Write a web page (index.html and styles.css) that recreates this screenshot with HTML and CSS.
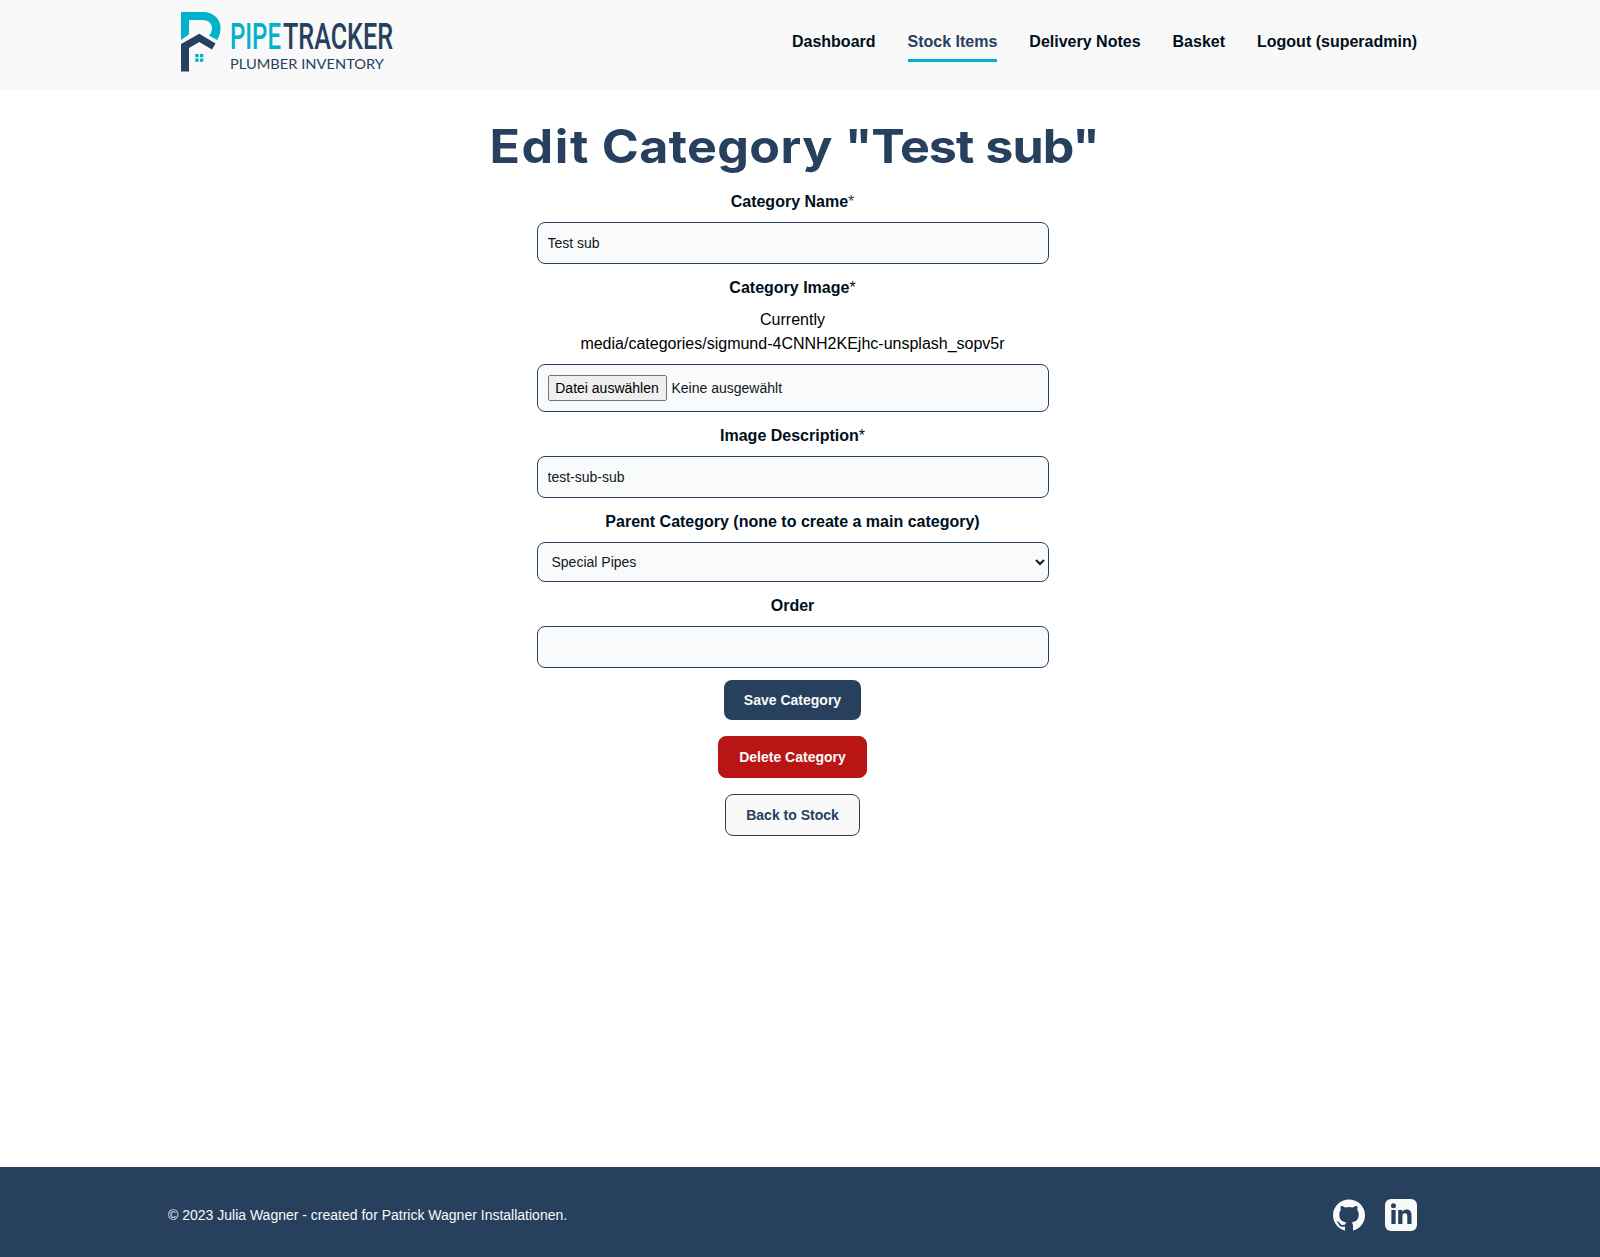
FILE: index.html
```html
<!DOCTYPE html>
<html lang="en">
<head>
<meta charset="utf-8">
<title>PipeTracker - Edit Category</title>
<link rel="stylesheet" href="styles.css">
</head>
<body>
<header class="header">
  <a class="logo">
    <svg width="216" height="66" viewBox="180 10 216 66" role="img" aria-label="PipeTracker Plumber Inventory">
      <path fill="#00b2ca" d="M181 12H203C213.500 12 220.500 19 220.500 28C220.500 33 219 37 217 40L209 35.500C210.800 33.500 212 31.500 212 28.500C212 23.500 208.500 20 203 20H189V34.500L181 40Z"/>
      <path fill="#27405e" d="M181 44L199.300 33.800L215.500 43.500L212 49.500L199.300 42L189 48V71.500H181Z"/>
      <path fill="#00b2ca" d="M195.200 54h3.400v3.300h-3.400zM200 54h3.300v3.300H200zM195.200 58.400h3.400v3.300h-3.400zM200 58.400h3.300v3.300H200z"/>
      <text class="logo-name logo-accent" x="230" y="48.500" textLength="51" lengthAdjust="spacingAndGlyphs">PIPE</text>
      <text class="logo-name" x="283" y="48.500" textLength="110" lengthAdjust="spacingAndGlyphs">TRACKER</text>
      <text class="logo-sub" x="230" y="68.800" textLength="154" lengthAdjust="spacingAndGlyphs">PLUMBER INVENTORY</text>
    </svg>
  </a>
  <nav class="nav">
    <a>Dashboard</a>
    <a class="active">Stock Items</a>
    <a>Delivery Notes</a>
    <a>Basket</a>
    <a>Logout (superadmin)</a>
  </nav>
</header>
<main class="main">
  <h1 class="title"><span class="title-text"><span class="wide">Edit</span> <span class="medium">Category</span> <span class="tight">"Test</span> <span class="tight">sub"</span></span></h1>
  <form class="form">
    <label class="label" for="name">Category Name<span class="star">*</span></label>
    <input class="field" id="name" type="text" value="Test sub">
    <span class="label">Category Image<span class="star dark">*</span></span>
    <p class="current">Currently<br>media/categories/sigmund-4CNNH2KEjhc-unsplash_sopv5r</p>
    <div class="field file"><span class="file-button">Datei auswählen</span><span>Keine ausgewählt</span></div>
    <label class="label" for="desc">Image Description<span class="star dark">*</span></label>
    <input class="field" id="desc" type="text" value="test-sub-sub">
    <label class="label" for="parent">Parent Category (none to create a main category)</label>
    <select class="field select" id="parent"><option>Special Pipes</option></select>
    <label class="label" for="order">Order</label>
    <input class="field" id="order" type="text">
    <button class="btn save" type="button">Save Category</button>
  </form>
  <a class="btn delete">Delete Category</a>
  <a class="btn back">Back to Stock</a>
</main>
<footer class="footer">
  <p class="copyright">© 2023 Julia Wagner - created for Patrick Wagner Installationen.</p>
  <div class="social">
    <svg width="32" height="32" viewBox="0 0 32 32">
      <path fill="#f9f9f9" d="M16 .4A16 16 0 0 0 0 16.200 16 16 0 0 0 12 31.600V27.600c-3.800.8-5.600-.4-6.400-2.600-.3-.8-1-1.400-1.700-1.900-.6-.5.1-.8.800-.6 1.200.3 1.800 1 2.400 1.900 1.200 1.700 3 1.800 5 1.200.2-1 .6-1.700 1.200-2.200-4.600-.7-7-2.900-7-7.900 0-1.900.5-3.300 1.500-4.500-.5-1.400-.4-2.900.1-4.100 1.500-.1 3 .5 4.400 1.500a16 16 0 0 1 7.400 0c1.400-1 2.900-1.600 4.400-1.500.5 1.200.6 2.700.1 4.100 1 1.200 1.500 2.600 1.500 4.500 0 5-2.400 7.200-7 7.900.9.800 1.300 1.900 1.300 3.600v4.600A16 16 0 0 0 32 16.200 16 16 0 0 0 16 .4z"/>
    </svg>
    <svg width="32" height="32" viewBox="0 0 32 32">
      <rect width="32" height="32" rx="6" fill="#f9f9f9"/>
      <circle cx="8.500" cy="6.800" r="2.500" fill="#27405e"/>
      <path fill="#27405e" d="M6.400 11h4.200v14H6.400zM13.200 11h4v2c.8-1.400 2.300-2.400 4.300-2.400 4 0 5 2.600 5 6.300V25h-4.200v-7.200c0-1.800-.1-3.600-2.300-3.600-2.300 0-2.600 1.700-2.600 3.500V25h-4.200z"/>
    </svg>
  </div>
</footer>
</body>
</html>
```
FILE: styles.css
```css
* { box-sizing: border-box; }
body {
  margin: 0;
  min-height: 1257px;
  display: flex;
  flex-direction: column;
  background: #fff;
  color: #000f1c;
  font: 16px/24px "Liberation Sans", Arial, sans-serif;
}
.header {
  height: 90px;
  padding: 10px 183px 0 168px;
  display: flex;
  justify-content: space-between;
  background: #f9f9f9;
}
.logo { padding-left: 12px; }
.logo svg { display: block; overflow: visible; }
.logo-name { font: 500 36.500px Roboto, sans-serif; fill: #27405e; }
.logo-accent { fill: #00b2ca; }
.logo-sub { font: 400 13.500px Lato, sans-serif; fill: #27405e; }
.nav { display: flex; gap: 32px; font-weight: 700; padding-top: 20px; }
.nav a { height: 32px; white-space: nowrap; }
.nav .active { color: #27405e; border-bottom: 3px solid #00b2ca; }
.main {
  flex: 1;
  padding: 26px 15px 0 0;
  display: flex;
  flex-direction: column;
  align-items: center;
}
.title {
  margin: 0 0 14px;
  padding-left: 4px;
  height: 60px;
  font: 700 46px/60px Inter, sans-serif;
  color: #27405e;
  white-space: nowrap;
}
.title-text { display: inline-block; transform: scaleX(1.091); }
.wide { letter-spacing: 1.4px; }
.medium { letter-spacing: .35px; }
.tight { letter-spacing: -.9px; }
.form { width: 512px; display: flex; flex-direction: column; align-items: center; }
.label { font-weight: 700; margin-bottom: 8px; }
.star { font-weight: 400; color: #27405e; }
.star.dark { color: #000f1c; }
.current { margin: 0 0 8px; text-align: center; color: #000; }
.field {
  width: 100%;
  height: 42px;
  margin: 0 0 12px;
  padding: 10px;
  border: 1px solid #27405e;
  border-radius: 8px;
  background: #f9fafc;
  color: #101820;
  font: 14px/20px "Liberation Sans", Arial, sans-serif;
}
.file { height: 48px; display: flex; align-items: center; gap: 5px; }
.file-button {
  height: 26px;
  width: 119px;
  border: 1px solid #767676;
  border-radius: 2px;
  background: #efefef;
  color: #000;
  font-size: 14px;
  line-height: 24px;
  text-align: center;
}
.select { height: 40px; }
.btn {
  height: 42px;
  padding: 0 20px;
  border: 1px solid #27405e;
  border-radius: 8px;
  font: 700 14px/40px "Liberation Sans", Arial, sans-serif;
  margin-bottom: 16px;
}
.save { height: 40px; line-height: 40px; border: 0; background: #27405e; color: #f9f9f9; }
.delete { background: #b91515; border-color: #b91515; color: #f9f9f9; }
.back { background: #f9f9f9; color: #27405e; }
.footer {
  height: 90px;
  padding: 5px 183px 0 168px;
  display: flex;
  align-items: center;
  justify-content: space-between;
  background: #27405e;
  color: #f9f9f9;
}
.copyright { margin: 0; font-size: 14px; }
.social { display: flex; gap: 20px; }
.social svg { display: block; }
```
